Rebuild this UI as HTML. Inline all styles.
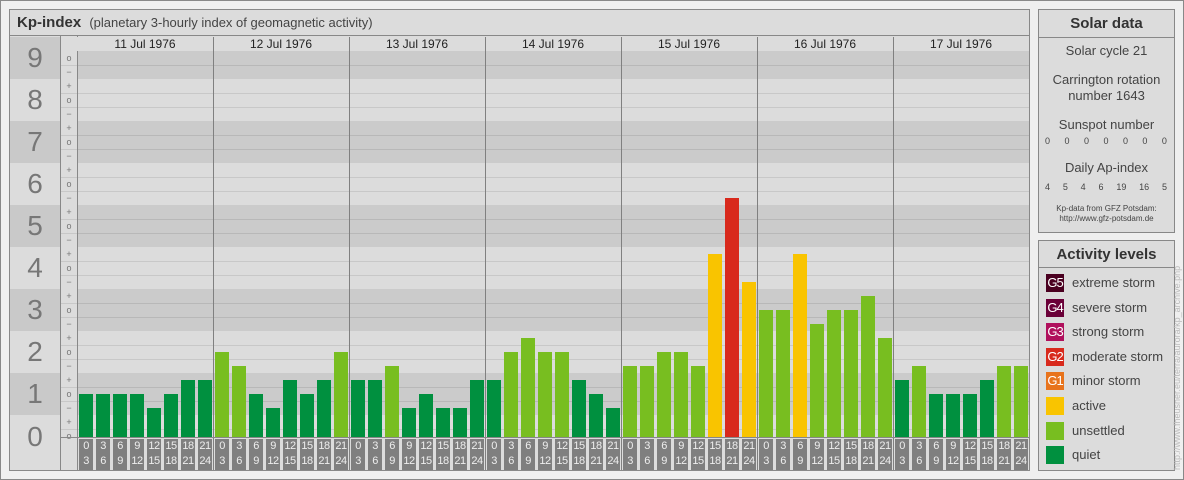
<!DOCTYPE html>
<html><head><meta charset="utf-8"><style>
*{margin:0;padding:0;box-sizing:border-box}
body{width:1184px;height:480px;background:#efefef;position:relative;overflow:hidden;font-family:"Liberation Sans",sans-serif;color:#333}
.abs{position:absolute}
#frame{left:0;top:0;width:1184px;height:480px;border:1px solid #888}
.panel{position:absolute;background:#dcdcdc;border:1px solid #888}
</style></head><body>
<div id="frame" class="abs"></div>
<div class="panel" style="left:9px;top:9px;width:1021px;height:462px"></div>
<div class="abs" style="left:10px;top:10px;width:1019px;height:26px;background:#dcdcdc;border-bottom:1px solid #888"></div>
<div class="abs" style="left:17px;top:14px;font-size:15px;font-weight:bold;color:#333">Kp-index <span style="font-weight:normal;font-size:13px;color:#444;margin-left:4px">(planetary 3-hourly index of geomagnetic activity)</span></div>
<div id="chart"></div>
<div class="panel" style="left:1038px;top:9px;width:137px;height:224px"></div>
<div class="abs" style="left:1039px;top:10px;width:135px;height:28px;border-bottom:1px solid #888;font-size:15px;font-weight:bold;line-height:28px;text-align:center">Solar data</div>
<div class="abs" style="left:1039px;top:43px;width:135px;text-align:center;font-size:13px;color:#444;line-height:16px">Solar cycle 21<div style="height:13px"></div>Carrington rotation<br>number 1643<div style="height:13px"></div>Sunspot number</div>
<div class="abs" style="left:1045px;top:136px;width:122px;font-size:9px;color:#444;display:flex;justify-content:space-between"><span>0</span><span>0</span><span>0</span><span>0</span><span>0</span><span>0</span><span>0</span></div>
<div class="abs" style="left:1039px;top:160px;width:135px;text-align:center;font-size:13px;color:#444">Daily Ap-index</div>
<div class="abs" style="left:1045px;top:182px;width:122px;font-size:9px;color:#444;display:flex;justify-content:space-between"><span>4</span><span>5</span><span>4</span><span>6</span><span>19</span><span>16</span><span>5</span></div>
<div class="abs" style="left:1039px;top:204px;width:135px;text-align:center;font-size:8px;color:#444;line-height:10px">Kp-data from GFZ Potsdam:<br>http://www.gfz-potsdam.de</div>
<div class="panel" style="left:1038px;top:240px;width:137px;height:231px"></div>
<div class="abs" style="left:1039px;top:241px;width:135px;height:27px;border-bottom:1px solid #888;font-size:15px;font-weight:bold;line-height:27px;text-align:center">Activity levels</div>
<div id="legend"></div>
<div class="abs" style="left:1172px;top:470px;transform-origin:0 0;transform:rotate(-90deg);font-size:9px;color:#bbb;white-space:nowrap;width:215px">http://www.fheusner.eu/terra/aurora/kp_archive.php</div>
<script>
(function(){
var h='';
var base=436,t=14;
for(var k=0;k<=9;k++){
 var yt,yb,ct,cb;
 if(k==9){yt=37;yb=79;ct=51;cb=79}else if(k==0){yt=415;yb=470;ct=415;cb=437}else{yt=base-(3*k+1.5)*t;yb=yt+42;ct=yt;cb=yb}
 var dark=(k%2==1);
 var lh=(k==0)?44:(yb-yt);
 h+='<div class="abs" style="left:10px;top:'+yt+'px;width:50px;height:'+(yb-yt)+'px;background:'+(dark?'#c9c9c9':'#dcdcdc')+';font-size:28px;color:#777;text-align:center;line-height:'+lh+'px">'+k+'</div>';
 h+='<div class="abs" style="left:77px;top:'+ct+'px;width:952px;height:'+(cb-ct)+'px;background:'+(dark?'#cbcbcb':'#dcdcdc')+'"></div>';
}
for(var i=0;i<=27;i++){
 var y=base-i*t;
 h+='<div class="abs" style="left:61px;top:'+(y-7)+'px;width:16px;height:14px;font-size:9px;color:#777;text-align:center;line-height:14px">'+(i%3==0?'o':(i%3==1?'+':'−'))+'</div>';
}
for(var i=0;i<27;i++){
 if(i%3==1)continue;
 var y=base-(i+0.5)*t;
 h+='<div class="abs" style="left:60px;top:'+y+'px;width:969px;height:1px;background:rgba(0,0,0,0.09)"></div>';
}
h+='<div class="abs" style="left:60px;top:36px;width:1px;height:434px;background:#888"></div>';
h+='<div class="abs" style="left:77px;top:36px;width:1px;height:434px;background:#888"></div>';
h+='<div class="abs" style="left:77px;top:37px;width:952px;height:14px;background:#dcdcdc"></div>';
var days=['11','12','13','14','15','16','17'];
var vals=[[3,3,3,3,2,3,4,4],[6,5,3,2,4,3,4,6],[4,4,5,2,3,2,2,4],[4,6,7,6,6,4,3,2],[5,5,6,6,5,13,17,11],[9,9,13,8,9,9,10,7],[4,5,3,3,3,4,5,5]];
function col(v){return v<=4?'#00903f':v<=10?'#78be20':v<=13?'#f9c400':v<=16?'#e8731c':'#d8291c'}
var lab=[['0','3'],['3','6'],['6','9'],['9','12'],['12','15'],['15','18'],['18','21'],['21','24']];
for(var d=0;d<7;d++){
 var x0=77+d*136;
 if(d>0)h+='<div class="abs" style="left:'+x0+'px;top:37px;width:1px;height:433px;background:#808080"></div>';
 h+='<div class="abs" style="left:'+x0+'px;top:37px;width:136px;text-align:center;font-size:12px;color:#222;line-height:15px">'+days[d]+' Jul 1976</div>';
 for(var j=0;j<8;j++){
  var bx=x0+2+j*17,v=vals[d][j];
  h+='<div class="abs" style="left:'+bx+'px;top:'+(base-v*t)+'px;width:14px;height:'+(v*t+1)+'px;background:'+col(v)+'"></div>';
  h+='<div class="abs" style="left:'+bx+'px;top:439px;width:14px;height:31px;background:#7f7f7f;color:#eee;font-size:11px;text-align:center;line-height:15px;letter-spacing:-0.5px">'+lab[j][0]+'<br>'+lab[j][1]+'</div>';
 }
}
h+='<div class="abs" style="left:60px;top:437px;width:969px;height:1px;background:#888"></div>';
document.getElementById('chart').innerHTML=h;
var L=[['#4a0020','G5','extreme storm'],['#6a0038','G4','severe storm'],['#b0105c','G3','strong storm'],['#d8291c','G2','moderate storm'],['#e8731c','G1','minor storm'],['#f9c400','','active'],['#78be20','','unsettled'],['#00903f','','quiet']];
var g='';
for(var i=0;i<8;i++){var y=274+i*24.6;
 g+='<div class="abs" style="left:1046px;top:'+y+'px;width:18px;height:18px;background:'+L[i][0]+';color:#fff;font-size:13px;line-height:18px;text-align:center;letter-spacing:-1px">'+L[i][1]+'</div>';
 g+='<div class="abs" style="left:1072px;top:'+(y+1)+'px;font-size:13px;color:#444;line-height:16px">'+L[i][2]+'</div>';}
document.getElementById('legend').innerHTML=g;
})();
</script>
</body></html>
